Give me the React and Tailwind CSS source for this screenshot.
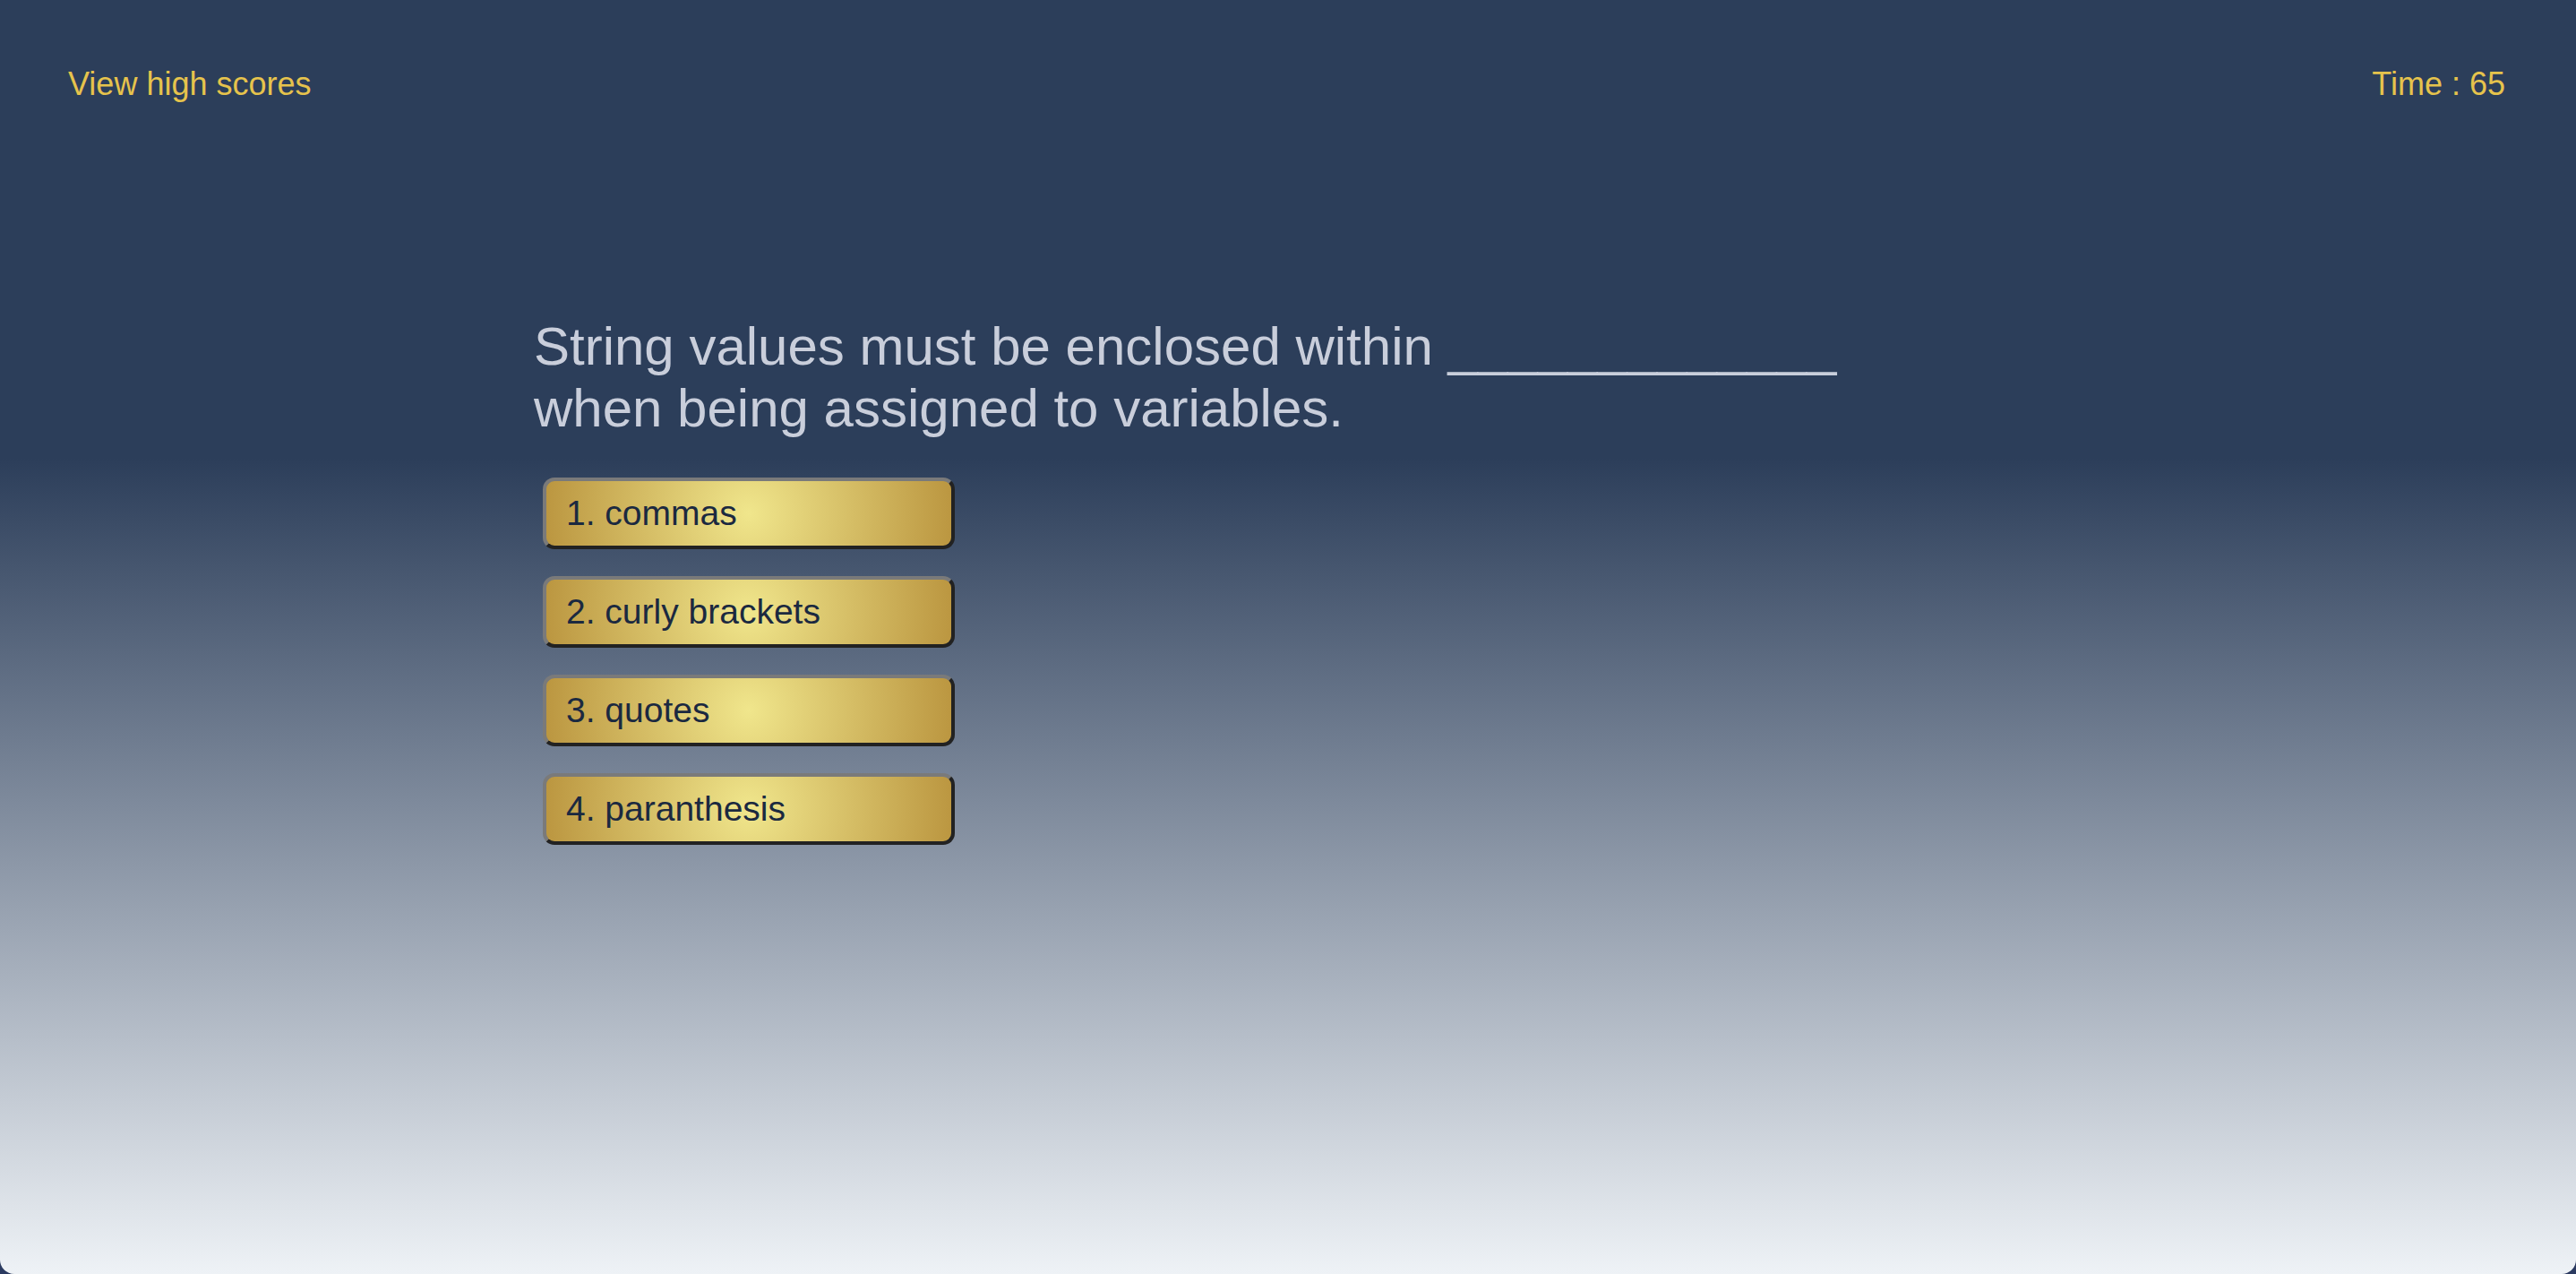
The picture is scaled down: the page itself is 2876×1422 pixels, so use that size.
const choices = ['1. commas', '2. curly brackets', '3. quotes', '4. paranthesis'];

export default function App() {
  return (
    <div className="min-h-screen bg-[#2b3a60]">
      <div className="min-h-screen rounded-b-[16px] bg-[linear-gradient(to_bottom,#2c3e5a_36%,#eef2f6_100%)] font-['Liberation_Sans',Arial,sans-serif]">
        <header className="flex items-start justify-between pl-[76px] pr-[79px] pt-[73px] text-[36px] leading-[41px] text-[#e6c34c]">
          <a href="#" className="hover:underline">View high scores</a>
          <span>Time : 65</span>
        </header>

        <main className="ml-[596px] mt-[238px] w-[1500px]">
          <h2 className="text-[60px] leading-[69px] text-[#c9cedb]">
            String values must be enclosed within _____________ when being assigned to variables.
          </h2>

          <ul className="ml-[10px] mt-[43px] flex flex-col gap-[30px]">
            {choices.map((c) => (
              <li key={c}>
                <button className="flex h-[80px] w-[460px] items-center rounded-[13px] border-4 border-t-[#7a7a7a] border-l-[#7a7a7a] border-r-[#222222] border-b-[#222222] bg-[radial-gradient(circle,#f0e68c,#bb9640)] pl-[22px] text-[39px] text-[#1b2940]">
                  {c}
                </button>
              </li>
            ))}
          </ul>
        </main>
      </div>
    </div>
  );
}
